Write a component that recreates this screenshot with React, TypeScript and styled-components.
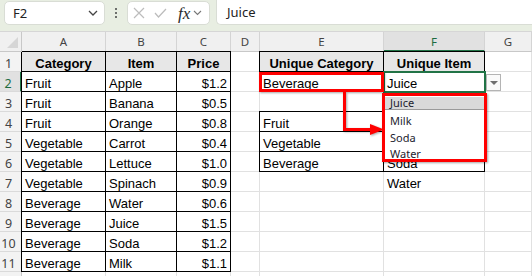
import React from 'react'
import styled, { createGlobalStyle } from 'styled-components'

const GlobalStyle = createGlobalStyle`
  html, body {
    margin: 0;
    padding: 0;
    background: #ffffff;
    overflow: hidden;
  }
  body {
    width: 532px;
    height: 276px;
    font-family: "Noto Sans", sans-serif;
  }
`

/*-- formula bar --*/
const FormulaBar = styled.div`
  display: flex;
  align-items: flex-start;
  height: 31px;
  background: #e8eee2;
  border-bottom: 1px solid #d6d6d6;
`

const Box = styled.div`
  box-sizing: border-box;
  display: flex;
  align-items: center;
  height: 24px;
  margin-top: 1px;
  background: #ffffff;
  border: 1px solid #d9ddd5;
  border-radius: 5px;
`

const NameBox = styled(Box)`
  width: 101px;
  margin-left: 4px;
  padding: 0 6px 0 8px;
  justify-content: space-between;
  font-size: 13px;
  color: #222;
`

const Dots = styled.div`
  display: flex;
  flex-direction: column;
  align-items: center;
  gap: 2px;
  width: 22px;
  padding-top: 8px;

  span {
    width: 2px;
    height: 2px;
    background: #444;
    border-radius: 1px;
  }
`

const FuncBox = styled(Box)`
  width: 83px;
  padding: 0 2px 0 5px;
  gap: 9px;
`

const Fx = styled.span`
  font-family: "Liberation Serif", "Times New Roman", serif;
  font-style: italic;
  font-size: 17px;
  color: #2b2b2b;
  margin-left: 2px;
  margin-right: -6px;
  line-height: 1;
`

const FormulaInput = styled.div`
  box-sizing: border-box;
  flex: 1;
  height: 25px;
  margin-left: 6px;
  padding-left: 10px;
  display: flex;
  align-items: center;
  background: #ffffff;
  border: 1px solid #d9ddd5;
  border-top: none;
  border-right: none;
  border-radius: 0 0 0 5px;
  font-size: 13px;
  color: #222;
`

/*-- sheet --*/
const COLS = '22px 84px 71px 54px 29px 124px 101px 1fr'

const Sheet = styled.div`
  position: relative;
`

const Row = styled.div`
  display: grid;
  grid-template-columns: ${COLS};
  height: 20px;
`

const Corner = styled.div`
  position: relative;
  box-sizing: border-box;
  background: #f0f0f0;
  border-right: 1px solid #c8c8c8;
  border-bottom: 1px solid #c8c8c8;

  &::after {
    content: '';
    position: absolute;
    right: 3px;
    bottom: 3px;
    border-left: 11px solid transparent;
    border-bottom: 11px solid #d6d6d6;
  }
`

const ColHead = styled.div<{ $active?: boolean }>`
  box-sizing: border-box;
  display: flex;
  align-items: center;
  justify-content: center;
  background: ${p => (p.$active ? '#e1e1e1' : '#f0f0f0')};
  border-right: 1px solid #d4d4d4;
  border-bottom: ${p => (p.$active ? '2px solid #217346' : '1px solid #c8c8c8')};
  font-size: 11.5px;
  color: ${p => (p.$active ? '#1d6b40' : '#444')};
  padding-bottom: ${p => (p.$active ? '0' : '1px')};
`

const RowHead = styled.div<{ $active?: boolean }>`
  box-sizing: border-box;
  display: flex;
  align-items: flex-end;
  justify-content: center;
  padding-right: 4px;
  background: ${p => (p.$active ? '#e1e1e1' : '#f3f3f3')};
  border-right: ${p => (p.$active ? '2px solid #217346' : '1px solid #c8c8c8')};
  border-bottom: 1px solid #dadada;
  font-size: 12.5px;
  line-height: 15px;
  color: ${p => (p.$active ? '#1d6b40' : '#444')};
`

type Align = 'left' | 'center' | 'right'

interface CellProps {
  $bold?: boolean
  $align?: Align
  $fill?: string
  $boxed?: boolean
  $edgeL?: boolean
  $edgeT?: boolean
}

const edgeShadow = (p: CellProps) => {
  if (p.$edgeL && p.$edgeT) return '-1px 0 0 #000, 0 -1px 0 #000, -1px -1px 0 #000'
  if (p.$edgeL) return '-1px 0 0 #000'
  if (p.$edgeT) return '0 -1px 0 #000'
  return 'none'
}

const Cell = styled.div<CellProps>`
  box-sizing: border-box;
  display: flex;
  align-items: flex-end;
  justify-content: ${p => (p.$align === 'right' ? 'flex-end' : p.$align === 'center' ? 'center' : 'flex-start')};
  padding: 0 3px;
  background: ${p => p.$fill ?? '#ffffff'};
  border-right: 1px solid ${p => (p.$boxed ? '#000' : '#e1e1e1')};
  border-bottom: 1px solid ${p => (p.$boxed ? '#000' : '#e1e1e1')};
  box-shadow: ${edgeShadow};
  font-family: "Liberation Sans", Arial, sans-serif;
  font-size: 13px;
  font-weight: ${p => (p.$bold ? 700 : 400)};
  line-height: 15px;
  color: #000;
  white-space: nowrap;
  overflow: hidden;
`

/*-- overlays --*/
const Selection = styled.div`
  position: absolute;
  left: 383px;
  top: 39px;
  width: 103px;
  height: 22px;
  box-sizing: border-box;
  border: 2px solid #217346;
`

const RedBox = styled.div`
  position: absolute;
  left: 259px;
  top: 40px;
  width: 125px;
  height: 20px;
  box-sizing: border-box;
  border: 3px solid #ff0000;
  box-shadow: 1px 1px 2px rgba(0, 0, 0, 0.35);
`

const Connector = styled.svg`
  position: absolute;
  left: 340px;
  top: 58px;
  filter: drop-shadow(1px 1px 1px rgba(0, 0, 0, 0.35));
`

const DropButton = styled.div`
  position: absolute;
  left: 486px;
  top: 42px;
  width: 15px;
  height: 17px;
  box-sizing: border-box;
  display: flex;
  align-items: center;
  justify-content: center;
  background: #fafafa;
  border: 1px solid #b4b4b4;

  &::after {
    content: '';
    border-left: 4px solid transparent;
    border-right: 4px solid transparent;
    border-top: 4px solid #6f6f6f;
  }
`

const DropList = styled.div`
  position: absolute;
  left: 382px;
  top: 61px;
  width: 105px;
  height: 69px;
  box-sizing: border-box;
  padding-top: 1px;
  background: #ffffff;
  border: 3px solid #ff0000;
  box-shadow: 1px 1px 2px rgba(0, 0, 0, 0.35);
  overflow: hidden;
`

const DropItem = styled.div<{ $active?: boolean }>`
  box-sizing: border-box;
  height: ${p => (p.$active ? '13px' : '16.5px')};
  margin-bottom: ${p => (p.$active ? '3px' : '0')};
  padding-left: 5px;
  background: ${p => (p.$active ? '#d9d9d9' : 'transparent')};
  border-bottom: ${p => (p.$active ? '1px solid #9a9a9a' : 'none')};
  font-size: 11px;
  line-height: ${p => (p.$active ? '12px' : '16.5px')};
  color: #1c1c2e;
`

/*-- data --*/
interface Spec {
  text?: string
  bold?: boolean
  align?: Align
  fill?: string
  boxed?: boolean
  edgeL?: boolean
  edgeT?: boolean
}

const HEAD_FILL = '#e7e7e7'

const tableA = [
  ['Category', 'Item', 'Price'],
  ['Fruit', 'Apple', '$1.2'],
  ['Fruit', 'Banana', '$0.5'],
  ['Fruit', 'Orange', '$0.8'],
  ['Vegetable', 'Carrot', '$0.4'],
  ['Vegetable', 'Lettuce', '$1.0'],
  ['Vegetable', 'Spinach', '$0.9'],
  ['Beverage', 'Water', '$0.6'],
  ['Beverage', 'Juice', '$1.5'],
  ['Beverage', 'Soda', '$1.2'],
  ['Beverage', 'Milk', '$1.1'],
]

// F4 and F5 sit under the open list, so they stay blank here
const colE = ['Unique Category', 'Beverage', '', 'Fruit', 'Vegetable', 'Beverage']
const colF = ['Unique Item', 'Juice', '', '', '', 'Soda', 'Water']

const buildRow = (r: number): Spec[] => {
  const specs: Spec[] = []
  const a = tableA[r - 1]
  for (let c = 0; c < 3; c++) {
    if (!a) { specs.push({}); continue }
    const head = r === 1
    specs.push({
      text: a[c],
      bold: head,
      align: head ? 'center' : c === 2 ? 'right' : 'left',
      fill: head ? HEAD_FILL : undefined,
      boxed: true,
      edgeL: c === 0,
      edgeT: head,
    })
  }
  specs.push({})
  const inHead = r === 1
  const inBox = r >= 4 && r <= 6
  const boxed = inHead || inBox
  specs.push({
    text: colE[r - 1],
    bold: inHead,
    align: inHead ? 'center' : 'left',
    fill: inHead ? HEAD_FILL : undefined,
    boxed,
    edgeL: boxed,
    edgeT: inHead || r === 4,
  })
  specs.push({
    text: colF[r - 1],
    bold: inHead,
    align: inHead ? 'center' : 'left',
    fill: inHead ? HEAD_FILL : undefined,
    boxed,
    edgeT: inHead || r === 4,
  })
  specs.push({})
  return specs
}

const letters = ['A', 'B', 'C', 'D', 'E', 'F', 'G']

const App: React.FC = () => {
  return <>
    <GlobalStyle />
    <FormulaBar>
      <NameBox>
        F2
        <svg width='10' height='6' viewBox='0 0 10 6'>
          <polyline points='1,1 5,5 9,1' fill='none' stroke='#444' strokeWidth='1.3' />
        </svg>
      </NameBox>
      <Dots><span /><span /><span /></Dots>
      <FuncBox>
        <svg width='12' height='12' viewBox='0 0 12 12'>
          <path d='M1 1 L11 11 M11 1 L1 11' stroke='#bcbcbc' strokeWidth='1.2' />
        </svg>
        <svg width='13' height='10' viewBox='0 0 13 10'>
          <polyline points='1,5 4.5,9 12,1' fill='none' stroke='#bcbcbc' strokeWidth='1.2' />
        </svg>
        <Fx>fx</Fx>
        <svg width='9' height='6' viewBox='0 0 9 6'>
          <polyline points='1,1 4.5,4.5 8,1' fill='none' stroke='#777' strokeWidth='1.1' />
        </svg>
      </FuncBox>
      <FormulaInput>Juice</FormulaInput>
    </FormulaBar>

    <Sheet>
      <Row>
        <Corner />
        {letters.map(l => (
          <ColHead key={l} $active={l === 'F'}>{l}</ColHead>
        ))}
      </Row>
      {Array.from({ length: 12 }, (_, i) => i + 1).map(r => (
        <Row key={r}>
          {/* row 12 only peeks in at the bottom edge, its number is out of view */}
          <RowHead $active={r === 2}>{r < 12 ? r : ''}</RowHead>
          {buildRow(r).map((s, c) => (
            <Cell
              key={c}
              $bold={s.bold}
              $align={s.align}
              $fill={s.fill}
              $boxed={s.boxed}
              $edgeL={s.edgeL}
              $edgeT={s.edgeT}
            >
              {s.text}
            </Cell>
          ))}
        </Row>
      ))}

      <Selection />
      <RedBox />
      <Connector width='48' height='50' viewBox='0 0 48 50'>
        <rect x='3' y='2' width='3' height='39' fill='#ff0000' />
        <rect x='3' y='38' width='29' height='3' fill='#ff0000' />
        <polygon points='30,34 44,39.5 30,45' fill='#ff0000' />
      </Connector>
      <DropButton />
      <DropList>
        <DropItem $active>Juice</DropItem>
        <DropItem>Milk</DropItem>
        <DropItem>Soda</DropItem>
        <DropItem>Water</DropItem>
      </DropList>
    </Sheet>
  </>
}

export default App
